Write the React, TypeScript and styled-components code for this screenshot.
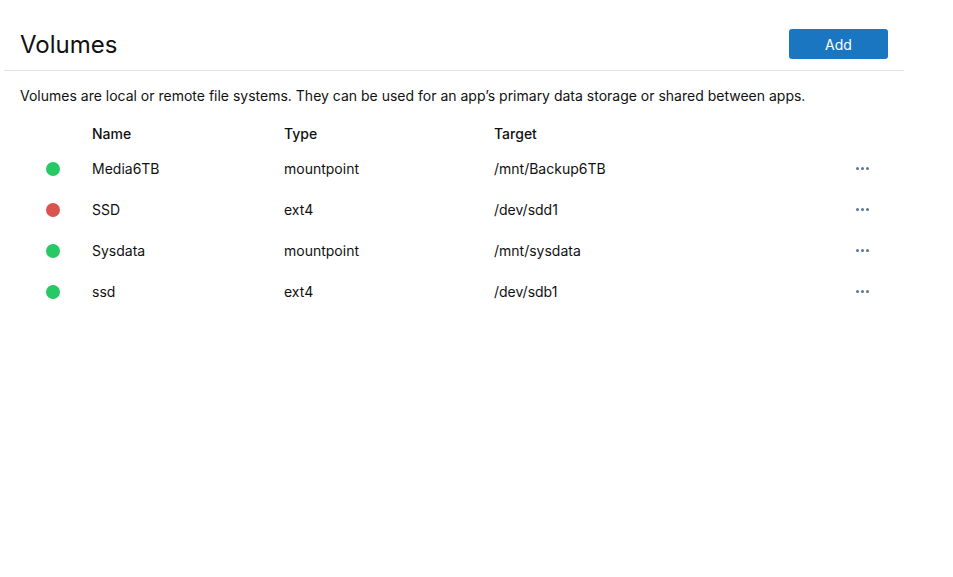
import React from "react";
import styled, { createGlobalStyle } from "styled-components";

const Global = createGlobalStyle`
  html, body { margin: 0; padding: 0; background: #fff; }
  body { font-family: Inter, "Noto Sans", sans-serif; color: #111; }
`;

const Page = styled.div`
  width: 900px;
  margin-left: 4px;
`;

const Header = styled.header`
  height: 71px;
  box-sizing: border-box;
  padding: 18px 16px 0;
  display: flex;
  align-items: center;
  justify-content: space-between;
  border-bottom: 1px solid #dde1e7;
`;

const Title = styled.h1`
  margin: 0;
  font-size: 24px;
  font-weight: 400;
  color: #111;
`;

const AddButton = styled.button`
  width: 99px;
  height: 30px;
  border: none;
  border-radius: 3px;
  background: #1b76c2;
  color: #fff;
  font-family: inherit;
  font-size: 14px;
  cursor: pointer;
`;

const Body = styled.div`
  padding: 15px 16px 0;
`;

const Description = styled.p`
  margin: 0 0 12px;
  font-size: 14px;
  line-height: 20px;
`;

const Row = styled.div<{ $head?: boolean }>`
  display: grid;
  grid-template-columns: 72px 192px 210px 1fr 32px;
  align-items: center;
  height: ${(p) => (p.$head ? "30px" : "41px")};
  font-size: 14px;
  font-weight: ${(p) => (p.$head ? 500 : 400)};
`;

const Dot = styled.span<{ $ok: boolean }>`
  display: block;
  width: 14px;
  height: 14px;
  border-radius: 50%;
  margin-left: 26px;
  background: ${(p) => (p.$ok ? "#26c963" : "#d9534f")};
`;

const More = styled.span`
  display: flex;
  gap: 2px;
  justify-content: flex-start;
  span {
    width: 3px;
    height: 3px;
    border-radius: 50%;
    background: #5b7597;
  }
`;

const volumes = [
  { name: "Media6TB", type: "mountpoint", target: "/mnt/Backup6TB", ok: true },
  { name: "SSD", type: "ext4", target: "/dev/sdd1", ok: false },
  { name: "Sysdata", type: "mountpoint", target: "/mnt/sysdata", ok: true },
  { name: "ssd", type: "ext4", target: "/dev/sdb1", ok: true },
];

export default function App() {
  return (
    <>
      <Global />
      <Page>
        <Header>
          <Title>Volumes</Title>
          <AddButton>Add</AddButton>
        </Header>
        <Body>
          <Description>
            Volumes are local or remote file systems. They can be used for an app’s primary data storage or shared between apps.
          </Description>
          <Row $head>
            <span />
            <span>Name</span>
            <span>Type</span>
            <span>Target</span>
            <span />
          </Row>
          {volumes.map((v) => (
            <Row key={v.name}>
              <Dot $ok={v.ok} />
              <span>{v.name}</span>
              <span>{v.type}</span>
              <span>{v.target}</span>
              <More>
                <span />
                <span />
                <span />
              </More>
            </Row>
          ))}
        </Body>
      </Page>
    </>
  );
}
